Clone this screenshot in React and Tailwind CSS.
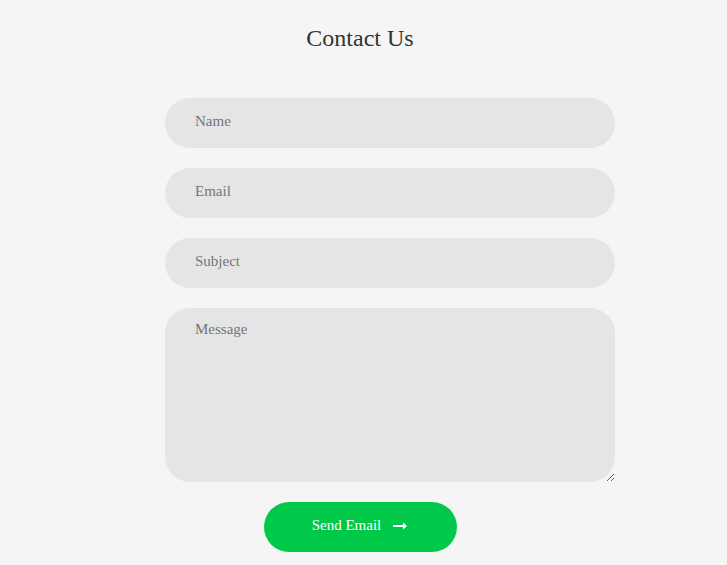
import React from 'react';

const App = () => {
  return (
    <div className="min-h-screen bg-[#f5f5f5] font-['Liberation_Serif',serif] text-[#333]">
      <div className="w-[720px] pt-[24px]">
        <h1 className="text-center text-[24px] leading-[28px] text-[#333]">Contact Us</h1>

        <form className="mt-[46px] ml-[165px] w-[450px] flex flex-col gap-[20px]">
          <input
            type="text"
            placeholder="Name"
            className="h-[50px] w-full rounded-full bg-[#e5e5e5] px-[30px] pb-[4px] text-[15px] outline-none placeholder:text-[#757575]"
          />
          <input
            type="email"
            placeholder="Email"
            className="h-[50px] w-full rounded-full bg-[#e5e5e5] px-[30px] pb-[4px] text-[15px] outline-none placeholder:text-[#757575]"
          />
          <input
            type="text"
            placeholder="Subject"
            className="h-[50px] w-full rounded-full bg-[#e5e5e5] px-[30px] pb-[4px] text-[15px] outline-none placeholder:text-[#757575]"
          />
          <textarea
            placeholder="Message"
            className="block h-[174px] w-full rounded-[25px] bg-[#e5e5e5] px-[30px] pt-[12px] text-[15px] leading-[18px] outline-none placeholder:text-[#757575]"
          />
        </form>

        <div className="mt-[20px] flex justify-center">
          <button
            type="button"
            className="flex h-[50px] w-[193px] items-center justify-center gap-[12px] rounded-full bg-[#00c94a] pb-[4px] text-[15px] text-white"
          >
            <span>Send Email</span>
            <svg width="15" height="10" viewBox="0 0 15 10" fill="none" className="mt-[2px]">
              <path d="M0 5h12" stroke="white" strokeWidth="2" />
              <path d="M10 1.5L14 5l-4 3.5z" fill="white" />
            </svg>
          </button>
        </div>
      </div>
    </div>
  );
};

export default App;
